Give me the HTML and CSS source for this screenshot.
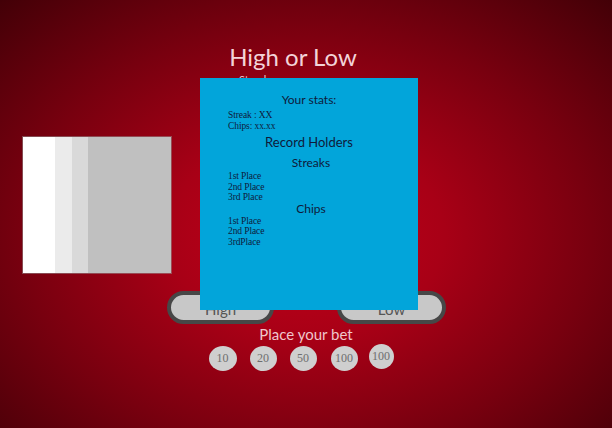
FILE: index.html
```html
<!DOCTYPE html>
<html>
<head>
<meta charset="utf-8">
<link rel="stylesheet" href="styles.css">
</head>
<body>
<div class="page">
  <h1 class="title">High or Low</h1>
  <div class="streak">Streak: x</div>
  <div class="table">
    <div class="deck">
      <div class="layer l1"></div>
      <div class="layer l2"></div>
      <div class="layer l3"></div>
      <div class="layer l4"></div>
    </div>
  </div>
  <div class="buttons">
    <button class="btn high">High</button>
    <button class="btn low">Low</button>
  </div>
  <div class="bet">Place your bet</div>
  <div class="chips">
    <span class="chip c1">10</span>
    <span class="chip c2">20</span>
    <span class="chip c3">50</span>
    <span class="chip c4">100</span>
    <span class="chip c5">100</span>
  </div>

  <div class="stats">
    <div class="h-main">Your stats:</div>
    <div class="line">Streak : XX</div>
    <div class="line">Chips: xx.xx</div>
    <div class="h-big">Record Holders</div>
    <div class="h-sub">Streaks</div>
    <div class="line">1st Place</div>
    <div class="line">2nd Place</div>
    <div class="line">3rd Place</div>
    <div class="h-sub h-chips">Chips</div>
    <div class="line">1st Place</div>
    <div class="line">2nd Place</div>
    <div class="line">3rdPlace</div>
  </div>
</div>
</body>
</html>
```
FILE: styles.css
```css
html, body {
  margin: 0;
  padding: 0;
}
body {
  width: 612px;
  height: 428px;
  overflow: hidden;
  background: radial-gradient(ellipse 75% 80% at 50% 55%, #c4001a 0%, #a80016 30%, #78000f 62%, #3c0006 100%);
  font-family: Lato, "Open Sans", sans-serif;
}
.page {
  position: relative;
  width: 612px;
  height: 428px;
  padding-top: 43px;
  box-sizing: border-box;
}
.title {
  margin: 0;
  padding-right: 26px;
  text-align: center;
  font-weight: 400;
  font-size: 24px;
  line-height: 28px;
  color: #f3d3d8;
}
.streak {
  padding-left: 239px;
  margin-top: 3px;
  font-size: 11px;
  line-height: 11px;
  color: #e8c6cb;
}
.table {
  padding-left: 23px;
  margin-top: 52px;
}
.deck {
  display: flex;
  width: 148px;
  height: 136px;
  outline: 1px solid rgba(150, 150, 150, 0.5);
}
.layer { height: 100%; }
.l1 { width: 32px; background: #ffffff; }
.l2 { width: 17px; background: #ebebeb; }
.l3 { width: 16px; background: #d9d9d9; }
.l4 { flex: 1; background: #c0c0c0; }
.buttons {
  display: flex;
  justify-content: center;
  gap: 63px;
  margin-top: 18px;
  padding-left: 1px;
}
.btn {
  box-sizing: border-box;
  height: 33px;
  border: 4px solid #474747;
  border-radius: 17px;
  background: #c8c8c8;
  font-family: Lato, sans-serif;
  font-size: 15px;
  color: #555;
  padding: 2px 0 0;
}
.high { width: 107px; }
.low { width: 109px; }
.bet {
  margin-top: 1px;
  text-align: center;
  font-size: 15px;
  line-height: 19px;
  color: #f0c6cc;
}
.chips {
  display: flex;
  justify-content: center;
  align-items: flex-start;
  gap: 13px;
  margin-top: 2px;
  padding-right: 10px;
}
.chip {
  display: flex;
  align-items: center;
  justify-content: center;
  width: 27px;
  height: 25px;
  border-radius: 50%;
  background: #cfcfcf;
  color: #6e6e6e;
  font-family: "Liberation Serif", serif;
  font-size: 12px;
}
.c1 { width: 28px; }
.c4 { margin-left: 1px; }
.c5 { width: 25px; margin-left: -2px; margin-top: -2px; }
.stats {
  position: absolute;
  left: 200px;
  top: 78px;
  width: 218px;
  height: 232px;
  box-sizing: border-box;
  padding: 14px 0 0 28px;
  background: #02a5da;
  color: #0f1a3a;
}
.h-main {
  text-align: center;
  padding-right: 28px;
  font-size: 12px;
  line-height: 16px;
}
.h-big {
  text-align: center;
  padding-right: 28px;
  font-size: 13px;
  line-height: 16px;
  margin-top: 3px;
  margin-bottom: 5px;
}
.h-sub {
  text-align: center;
  padding-right: 24px;
  font-size: 12px;
  line-height: 15px;
  margin-bottom: 1px;
}
.h-chips {
  line-height: 14px;
  margin-top: -1px;
  margin-bottom: 0;
}
.line {
  font-family: "Liberation Serif", serif;
  font-size: 9.5px;
  line-height: 10.5px;
  letter-spacing: -0.1px;
}
.h-main + .line { margin-top: 2px; }
```
